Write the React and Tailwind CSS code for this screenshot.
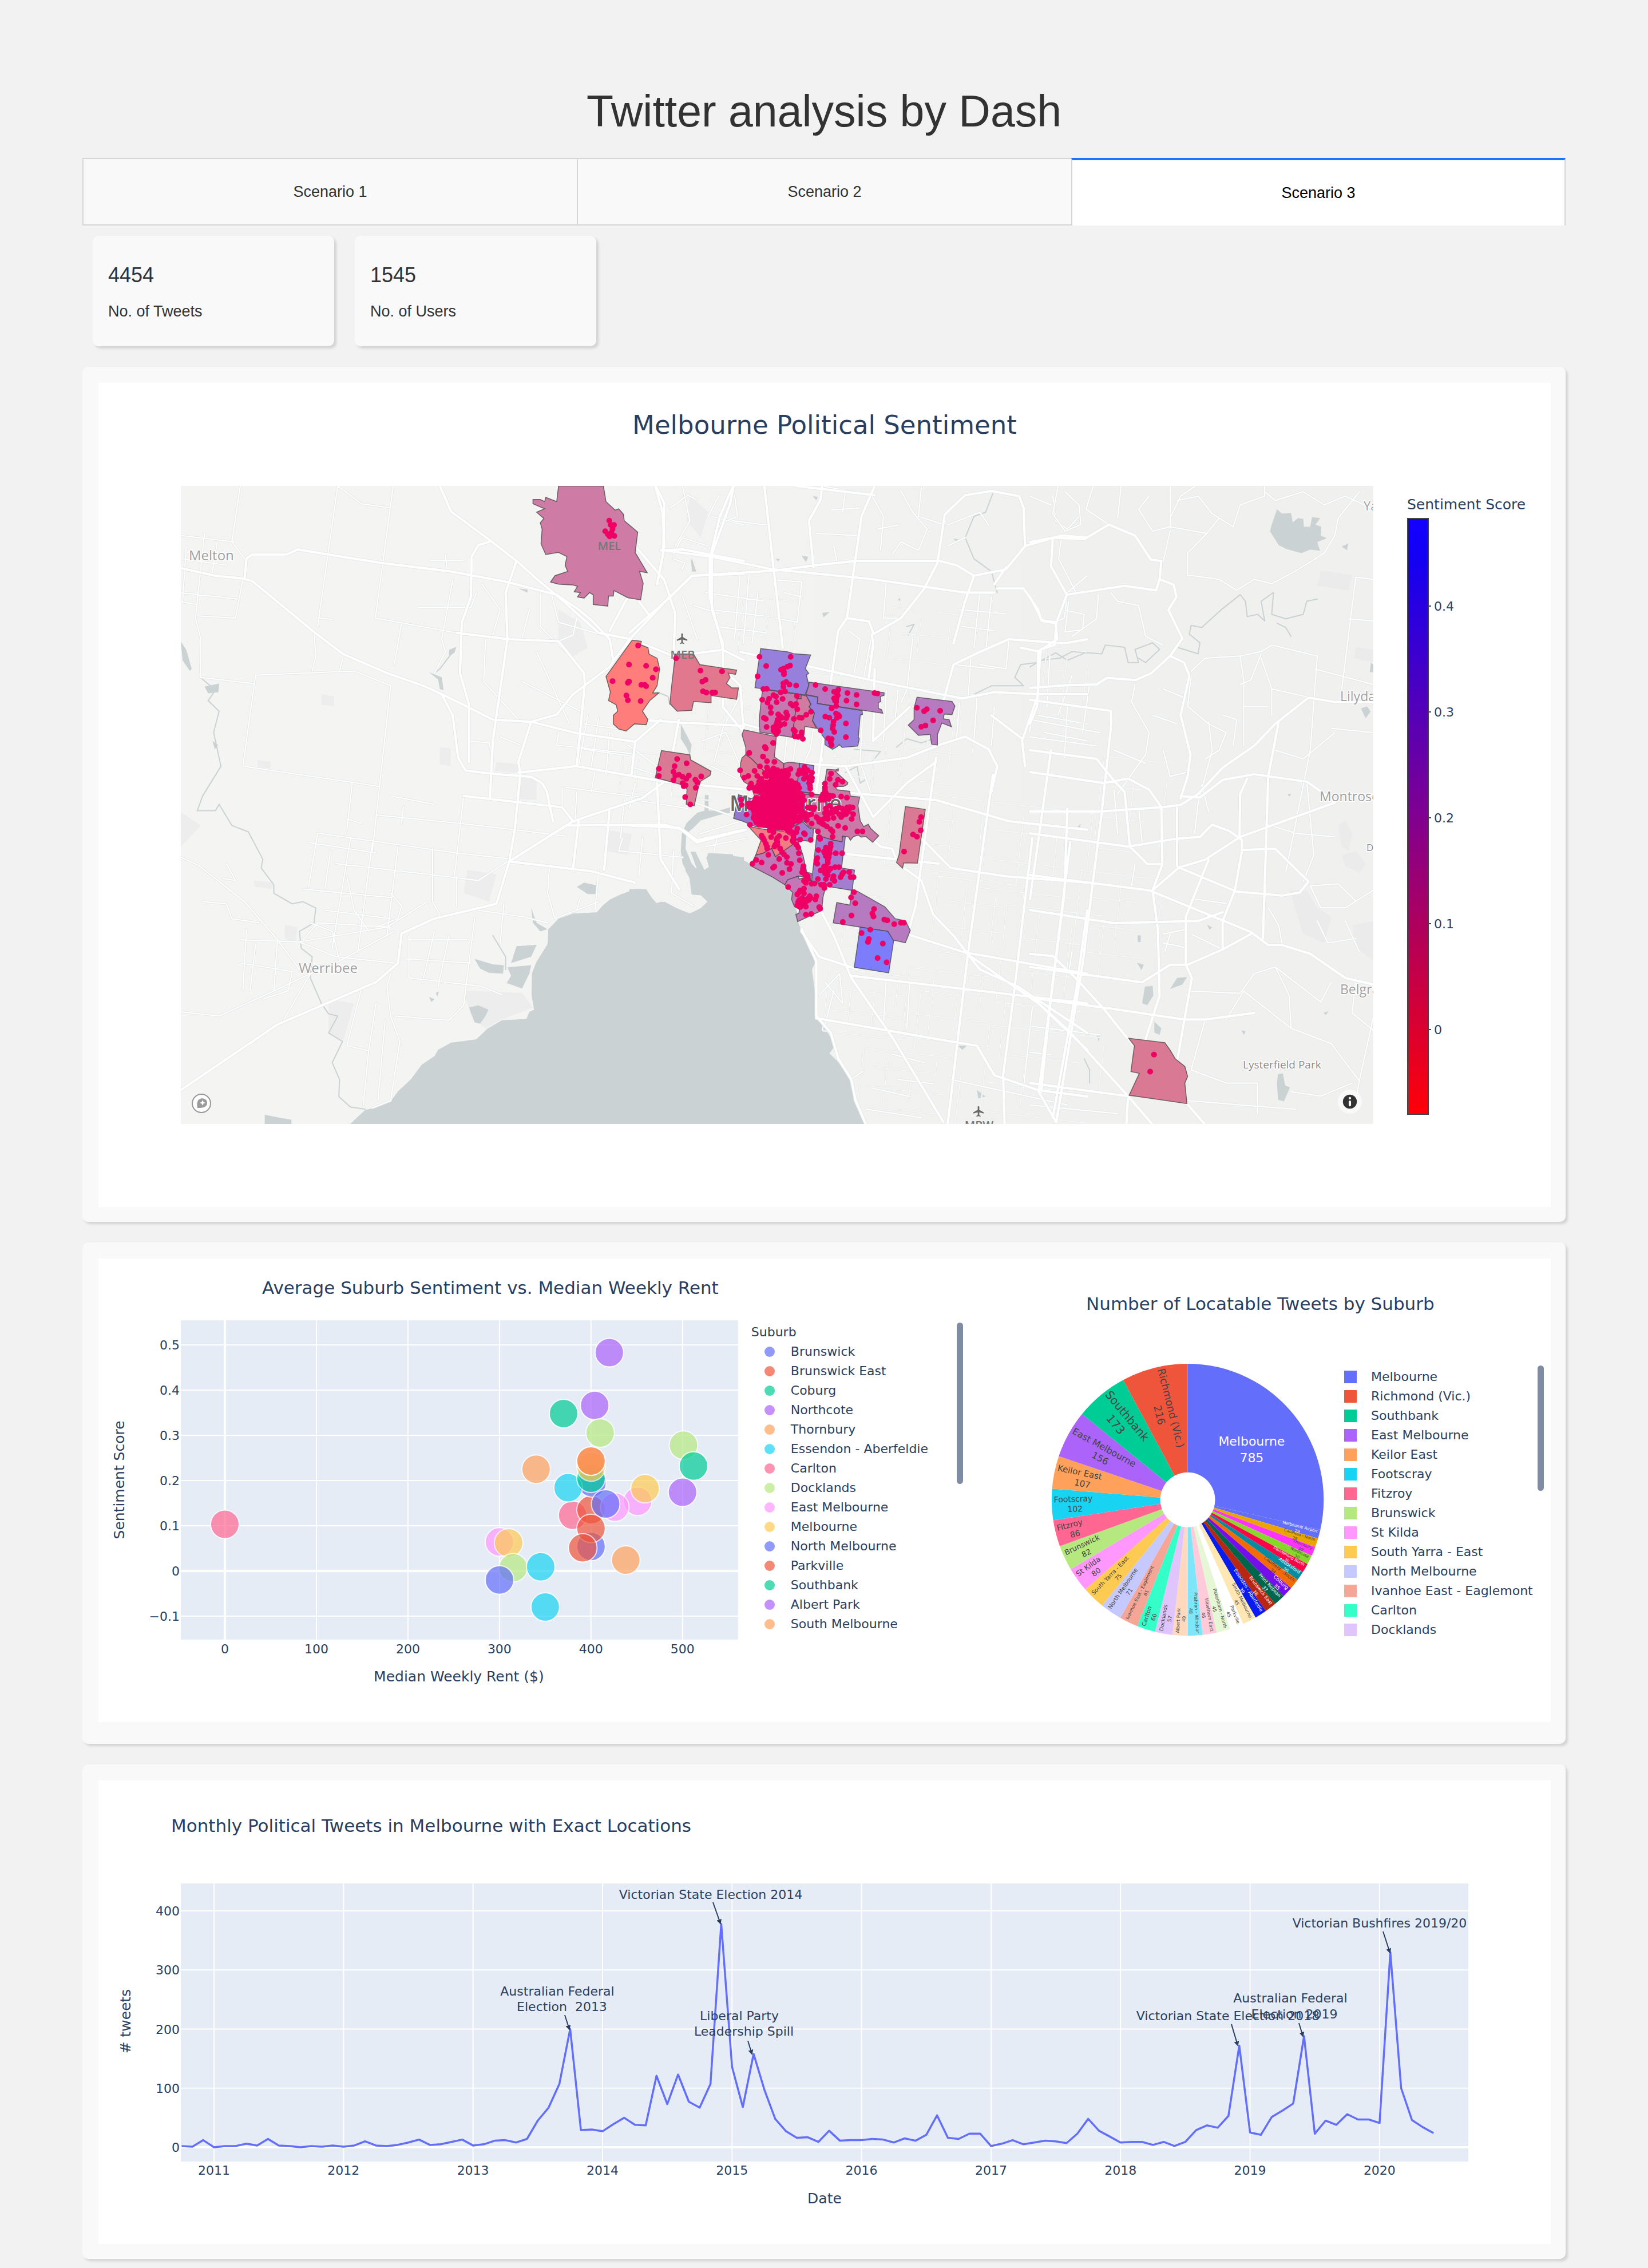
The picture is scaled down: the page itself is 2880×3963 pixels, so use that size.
import React from "react";
import { MdLocalAirport } from "react-icons/md";

/* ---------- Shared pieces ---------- */

function Panel({ children }) {
  return (
    <section className="mt-9 rounded-[10px] bg-[#f9f9f9] pt-7 pr-[26px] pb-[26px] pl-7 shadow-[4px_4px_4px_lightgrey]">
      {children}
    </section>
  );
}

function StatCard({ value, label }) {
  return (
    <div className="w-[422px] rounded-[10px] bg-[#f9f9f9] px-[27px] pt-[45px] pb-10 shadow-[4px_4px_4px_lightgrey]">
      <p className="text-[36px] leading-[48px]">{value}</p>
      <p className="mt-[18px] text-[27px] leading-[42px]">{label}</p>
    </div>
  );
}

function ScrollThumb({ height }) {
  return <div className="w-[11px] rounded-full bg-[#808BA4]" style={{ height }} />;
}

/* ---------- Map ---------- */

// Each sheet of the map has its own origin and scale.
const SHEETS = {
  west: [300, 820, 0.6378, 0.7398],
  centre: [1100, 820, 0.5102, 0.7398],
  east: [1800, 820, 0.6122, 0.7653],
  inner: [1270, 1230, 1 / 3, 1 / 3],
  north: [1300, 1110, 1 / 3, 1 / 3],
};

function Sheet({ name, children }) {
  const [x, y, sx, sy] = SHEETS[name];
  return <g transform={`translate(${x} ${y}) scale(${sx} ${sy})`}>{children}</g>;
}

function Lines({ d, width, color }) {
  return (
    <path d={d} fill="none" stroke={color} strokeWidth={width} strokeLinejoin="round" strokeLinecap="round" vectorEffect="non-scaling-stroke" />
  );
}

const MAJOR = {
  west: "M25 232L120 250 190 256 220 262 390 383 470 435 590 480 690 510 740 530 770 580 785 680 805 710 880 718 985 725 1015 740 1028 760 1045 830M200 255L205 210 220 200 315 200 345 188 430 200 575 220 765 240 920 265 1055 295 1115 330 1150 355 1200 400M735 38L765 98 870 165 945 215 1010 265 1060 300 1170 385 1260 400 1375 440 1510 425 1568 450M870 170L840 178 822 205 820 300 795 360 790 480 815 555 815 690M945 215L915 290 920 400 880 640 872 778M780 385L925 400 1060 405 1130 480 1132 505 1110 700M740 530L800 555 880 590 985 595 1055 578 1100 530 1200 465 1255 400 1365 300 1425 250 1568 245M985 595L950 690 955 715M985 595L1110 622 1270 642 1340 590M950 715L1110 700 1340 735 1568 755M800 770L1070 797 1100 830M25 1465L290 1310 560 1210 620 1165 630 1095 720 1060 890 1025 925 925 1080 840 1350 838 1400 850 1440 875 1568 850M925 925L1100 830 1290 775 1345 740M925 925L1150 948 1270 975M925 925L940 850 955 720M1260 400L1240 420 1210 450 1200 400M1325 38L1345 100 1350 180 1330 270M1200 130L1280 190 1350 260 1380 340 1375 440M1280 310L1310 345 1365 300M1540 38L1530 80 1480 200 1480 330 1510 410 1510 560 1568 620M1340 190L1400 188 1568 215M1270 590L1568 605M1330 740L1340 920 1390 990M1200 800L1185 945M1115 830L1100 940M1270 642L1260 720M1390 590L1370 680M1250 300L1200 380",
  centre: "M90 38L120 80 115 200 95 270M355 38L310 110 275 210 275 300 320 420 320 470 380 510 390 610M462 38L495 240 525 420M660 38L655 70 615 120 630 230M840 38L795 110 745 350 715 380 690 500 640 760M0 385L140 300 215 250 500 238 640 225 780 215 1060 215 1120 225 1180 250 1150 310 1110 410M115 190L280 205 490 235 830 258 1150 290 1250 290M570 38L840 60M1240 50L1150 60 1080 105 1055 220 1010 280 930 350 830 390 835 410 820 490M1240 50L1335 62 1350 90 1355 180 1290 235 1180 250M1355 180L1480 155 1568 160M1260 280L1350 280 1400 330 1410 355 1460 360 1465 400 1400 430 1400 530 1345 640 1355 700M1290 230L1250 270M745 350L820 358 835 385M1568 400L1490 410 1300 400 1200 430 1110 460 1070 560M380 430L620 465 850 500 1140 540M1140 540L1250 525 1400 530 1568 530M390 600L500 620M510 690L740 700 950 680 1060 650 1150 630 1230 660 1260 700 1240 760M500 690L640 720M840 470L835 640 960 560M1050 680L980 1030 960 1080M740 700L835 820 950 740 1050 690M700 760L1050 780 1300 830 1568 850M640 900L780 910 1060 930M780 840L860 890 900 895 920 930 1000 970 1040 1050 1110 1100 1200 1180 1330 1220M1000 870L1100 940 1290 960 1568 975M920 1090L1150 1140 1568 1190M590 1090L650 1150 740 1170 780 1180M640 1020L700 1100 760 1200 900 1340 1075 1540M640 1295L850 1320 1100 1350 1190 1360 1250 1430 1400 1465 1568 1480M760 1195L1568 1260M1245 720L1160 1140 1090 1546M1380 870L1320 1220 1280 1430 1285 1546M1500 800L1490 1000 1440 1270 1410 1470M1330 1220L1568 1330M1150 1140L1400 1260 1568 1370M0 840L170 845 230 880 400 850M590 1085L640 1160 640 1290 690 1330 715 1390 760 1440 775 1490 810 1546M1568 1040L1530 1230 1450 1530M1240 580L1345 635M1410 430L1340 420",
  east: "M0 165L65 155 155 158 225 125 300 150 345 205 375 208 370 250 410 262 418 290 395 320 435 385 400 425 440 440 455 470 430 560 458 650 450 700 430 750M65 155L60 220 105 285 75 350 70 400 30 410 20 540 0 580M105 285L270 265 360 275 370 250M0 290L35 345 70 350M0 498L100 492 190 490 220 475 300 480 345 465 400 425M0 525L230 550 232 580 205 780 150 1130 75 1490M0 640L190 660 240 710 270 735 285 860 335 900 378 900M0 690L210 715 280 705 340 730 375 770 378 900 350 960 365 1050 370 1200 330 1300M60 640L0 980M0 780L200 780 380 770 430 765 480 740 550 680 640 630 700 580 795 520 870 530 980 530M430 745L485 748 550 708 640 695 790 712 850 745 870 760 600 838 500 890 425 908 350 960M0 830L280 860 420 842 485 838 520 810 570 825 605 845 605 870 585 960 550 1030M605 868L700 865 795 940 770 965 720 972 590 963 425 908M0 925L340 960 630 1055 680 1085 720 1085 800 1105 900 1160 980 1175M710 575L680 700 665 1070M620 705L600 740 598 838M420 765L420 905M510 890L445 1020 445 1130 462 1160 420 1350M0 1005L240 1035 480 1030 550 1010M550 1030L550 1095 630 1060M0 1105L65 1110 130 1160 210 1230 330 1350 440 1440 500 1495M0 1135L320 1170 400 1130 450 1130 550 1095M0 1200L110 1280 280 1430 350 1495M0 1205L230 1230 440 1255 500 1255 640 1240M0 1400L280 1430 275 1495M115 850L60 1200 25 1420 75 1490",
};

const MINOR = {
  west: "M188 38L165 170 200 210M455 38L400 370M405 350L440 353M455 38L520 80 600 90M607 38L558 350 780 385M630 360L610 460M390 383L395 440 385 475M25 155L170 170M25 290L180 305M25 312L70 318M70 345L175 350 195 258M90 150L65 350 80 400 78 490M40 180L30 310M125 170L110 250M25 210L150 225M78 490L225 505M230 485L500 475 600 510 550 900M230 485L195 700 495 738 570 748M495 738L480 850M470 440L460 475M560 815L790 835 940 850 1080 865M800 770L775 960M400 858L375 985M400 858L620 885 780 905 920 918M375 880L560 905M490 870L440 1130M550 880L510 1140M620 890L590 1100M450 930L700 955 840 970 920 925M360 990L600 1010M435 900L420 990M25 915L75 935 200 1020 290 1110 350 1180M85 1020L150 1025 165 1060 240 1070M190 1110L350 1115 590 1080 700 1020M25 1280L130 1290 270 1235 380 1190 460 1160 610 1090M380 1190L300 1310M205 1085L195 1230M230 1120L215 1230M290 1110L280 1230M190 1165L330 1185 320 1230 250 1250M360 1110L400 1070 600 1080M350 1115L450 1150 610 1165M520 1225L480 1360 540 1372M560 1260L540 1370 525 1500M585 1300L565 1490M600 1190L590 1220 600 1290 625 1350 600 1490 550 1507M610 1290L760 1300 800 1265 830 1060M650 1110L810 1110M640 1155L820 1165M650 1200L850 1220 905 1240M650 1100L650 1200M720 1090L690 1200M760 1100L730 1220M715 895L715 1020 740 1060M780 960L780 1030M910 1025L900 1120M840 1040L960 1055 1030 1070M1035 940L1030 1000 1050 1060 1170 1020M1080 750L1300 775M1070 750L1070 797M1160 710L1150 760M1235 870L1225 900 1400 915M1290 870L1280 960M1060 620L1055 650 1260 670M1140 580L1115 700M1170 585L1150 700M1200 620L1190 720M1130 600L1250 615M1130 660L1250 675M900 630L955 650M815 640L870 645 880 690M675 325L820 325 835 290M750 200L755 240M710 215L800 215M770 260L740 400 750 430 720 480M1010 290L1010 370 1080 430M1040 290L1060 360 1200 395M1110 350L1100 390 1060 405M960 500L1120 570M1000 430L1090 600M860 400L855 500 950 590M850 270L900 330 880 390M980 330L960 400M150 930L175 970 140 965M380 1070L440 1090 460 1160M480 960L500 1040 540 1090M420 1040L600 1060M600 1000L630 1030 620 1060 560 1080M1120 1010L1110 1040M1170 945L1160 1040M1375 900L1370 1000 1430 1030M1110 760L1105 830M1250 650L1330 700M1240 780L1230 870M600 770L720 790M480 825L520 835M635 795L630 835M1400 40L1420 120 1380 180M1480 110L1568 130M1500 60L1470 110M1400 300L1440 400M1430 320L1500 340",
  centre: "M140 90L200 60 230 70M150 200L180 160 270 180M180 235L190 220 150 210M360 60L370 110 300 130M350 120L470 130M380 240L360 400M410 245L390 410M440 290L420 410M260 290L460 310M280 330L460 345M300 370L470 385M500 260L590 265 575 360 500 350M530 290L590 300M660 38L790 55M740 50L730 100M690 95L790 90M640 150L780 155M700 180L710 215M830 60L870 110 860 190M930 50L970 100 1020 140 990 190 930 170 900 200M850 140L920 130M1000 40L990 110 1080 130M1090 130L1200 100 1230 130M1090 180L1150 160M880 260L870 350 930 350M750 380L790 400 770 480M830 390L800 500M970 400L950 520 930 550M1130 330L1290 340M1140 370L1250 380M1200 290L1180 420M1240 300L1220 430M1300 400L1290 470 1200 460M1110 460L1250 470M1170 440L1160 540M1568 250L1500 290 1490 350 1460 360M1480 160L1470 210 1530 290M1450 60L1460 120 1500 140 1540 110M1400 580L1568 600M1390 540L1370 620M1440 440L1430 560M1500 560L1490 680M1420 620L1568 640M1250 560L1240 650M1190 540L1180 640M1130 550L1120 640M880 520L870 640M920 520L910 590M390 520L320 610 290 690M330 620L380 700M250 640L330 620M280 700L370 730M200 780L360 820M240 860L380 830M260 890L400 870M300 870L290 900M0 700L90 720M20 740L0 800M20 780L200 800M640 560L620 660 600 690M540 630L530 690M570 640L560 690M670 560L660 690M800 560L790 690 830 770M1100 1440L1500 1500M880 1200L870 1310M960 1210L950 1320M1380 1270L1350 1460M700 1230L670 1310M650 1240L720 1190 730 1260 670 1210M900 1380L1010 1400M920 1440L1040 1450M800 1420L760 1440M830 1460L960 1480M810 1510L1000 1530",
  east: "M80 38L65 100 100 140 145 125 140 80 100 50M180 38L160 90 225 125M260 38L250 110M400 38L400 130 350 140 310 90 340 60M420 70L480 60 520 100 580 130 600 80 670 60 670 38M400 110L430 60 470 38M670 50L700 70 780 50 840 80 900 60 980 90M400 130L505 145 450 190 450 240 540 250 590 275 640 250 690 260 760 230 840 190 870 150 880 110 940 50M380 210L400 140M505 145L540 110M110 300L100 370 150 365 155 330 100 320M195 285L190 340 120 380M230 280L250 300 310 310 330 380 380 400M460 460L500 430 600 425 660 415 690 400 820 425 800 640 730 920M930 245L890 500M930 245L980 250M910 340L980 345M600 425L610 480 610 630M660 420L630 480 600 490M660 430L690 500 690 560M690 500L800 520M510 575L520 640 480 760M460 470L450 540 510 580 560 600 540 640 500 660M815 455L980 490M870 600L780 660 700 640M860 590L980 600M610 540L680 540M790 710L810 880 780 940M680 810L760 830 870 838M800 950L880 945 930 985M470 980L560 990M460 1060L550 1095M450 1190L600 1195 640 1150 700 1135 740 1200 745 1275 610 1190M610 1190L560 1255M500 1255L460 1370 560 1400 650 1400 650 1470M745 1275L860 1310 940 1395 930 1440M940 1395L980 1250M0 1270L200 1290M0 1330L60 1335M720 1085L710 1040 680 1000M700 1135L830 1215 860 1170M930 1160L920 1240 980 1280M820 1030L850 1080 930 1070M900 1030L940 1100M800 950L830 1000 900 1000 980 960M745 1420L830 1430 920 1400M450 1440L600 1450 760 1460M300 490L290 530 340 600 330 650 250 740M380 500L440 520M350 560L420 580M240 640L330 670M240 730L250 830M310 770L320 850M120 470L80 560M170 490L150 600M0 570L200 600M0 610L190 630M120 1100L110 1150M300 900L290 950M380 1080L440 1090M380 1060L440 1050M385 1100L400 1060M480 760L470 830M490 720L510 780M380 640L400 700 450 690M550 560L590 570 580 630M0 60L60 80M0 1450L250 1470",
};

// Local streets: tilted blocks given as [x, y, width, height, columns, rows].
const BLOCKS = [
  [1590, 1200, 120, 160, 3, 3], [1560, 1380, 160, 130, 3, 3], [1640, 1530, 150, 130, 3, 3],
  [1730, 1400, 180, 150, 3, 3], [1450, 1690, 160, 110, 4, 3], [1590, 1690, 170, 120, 4, 3],
  [1510, 1830, 170, 100, 4, 3], [1760, 1580, 170, 170, 3, 3], [1730, 1790, 200, 150, 3, 3],
  [1480, 1560, 70, 90, 3, 3], [1930, 1320, 110, 160, 2, 3], [1890, 1520, 140, 140, 2, 3],
  [1390, 1170, 110, 90, 4, 3], [1300, 1040, 90, 100, 2, 3], [1240, 1230, 80, 80, 3, 3],
  [1440, 1290, 110, 60, 5, 2], [1560, 1060, 150, 90, 3, 2], [1180, 1330, 90, 60, 3, 3],
  [1090, 1310, 80, 70, 3, 2], [1830, 1130, 70, 120, 2, 3],
];

function blockPath() {
  const tilt = 0.115;
  let d = "";
  for (const [x, y, w, h, nx, ny] of BLOCKS) {
    for (let i = 0; i <= nx; i++) {
      const px = x + (w * i) / nx;
      const py = y + tilt * (px - x) + ((i * 37) % 5) * 6;
      const len = h - ((i * 53) % 4) * 20;
      d += `M${px} ${py}L${px - tilt * len} ${py + len}`;
    }
    for (let j = 0; j <= ny; j++) {
      const py = y + (h * j) / ny;
      const px = x - tilt * (py - y) + ((j * 29) % 3) * 10;
      const len = w - ((j * 31) % 4) * 18;
      d += `M${px} ${py}L${px + len} ${py + tilt * len}`;
    }
  }
  return d;
}

const BLOCK_D = blockPath();

const WATER = {
  west: "M488 1546L530 1512 555 1507 600 1492 620 1468 655 1440 685 1405 720 1385 730 1370 765 1353 835 1345 865 1320 905 1300 972 1297 980 1280 993 1275 986 1240 987 1190 998 1165 1030 1120 1032 1085 1060 1060 1100 1048 1165 1045 1180 1030 1200 1015 1230 1003 1270 990 1300 990 1315 1010 1330 1025 1350 1020 1390 1038 1420 1048 1450 1035 1468 1020 1450 1005 1425 1003 1418 960 1400 930 1395 900 1398 860 1410 835 1440 810 1460 805 1461 768 1471 768 1471 805 1500 805 1530 797 1530 810 1500 815 1450 828 1430 845 1410 860 1408 895 1425 930 1440 945 1422 902 1435 902 1460 945 1472 938 1465 915 1480 905 1568 915 1568 1546ZM255 1523L295 1530 328 1535 328 1546 255 1546ZM815 1270L840 1265 868 1275 860 1290 845 1308 830 1305ZM1110 985L1130 975 1168 982 1165 1002 1140 1002ZM945 1125L1000 1122 985 1150 930 1165ZM920 1175L985 1170 980 1190 960 1225 918 1212 930 1195ZM830 1155L880 1168 910 1170 908 1190 870 1188 845 1178ZM25 405L40 425 55 470 50 475 30 450ZM760 425L780 418 775 432 760 440ZM705 478L740 490 745 520 735 518 730 495ZM1425 208L1437 240 1425 240ZM1395 600L1425 650 1420 675 1410 655 1395 635ZM90 512L130 505 128 525 100 528ZM112 640L127 650 118 660ZM950 280L975 283 975 290ZM705 1245L720 1250 712 1257ZM724 1235L732 1232 728 1245ZM985 1035L1000 1070 1030 1085 1010 1090 990 1070Z",
  centre: "M0 990L40 990 60 1010 85 1025 110 1020 205 1048 240 1040 268 1020 250 1005 215 1003 215 975 190 945 240 940 258 945 278 935 265 915 270 905 355 908 350 928 362 928 365 915 400 925 420 935 470 950 535 982 558 1000 560 1020 575 1045 578 1068 590 1090 635 1135 636 1165 625 1180 635 1230 638 1290 680 1330 705 1360 685 1378 710 1395 760 1440 768 1490 805 1546 0 1546ZM210 208L228 240 215 240ZM590 203L612 205 605 218ZM628 62L645 64 640 72ZM660 338L685 336 665 348ZM1110 162L1130 165 1122 172ZM1125 1360L1155 1360 1140 1370ZM1190 1465L1220 1480 1195 1485ZM500 210L515 211 510 216ZM920 305L928 303 927 311Z",
  east: "M690 125L705 90 720 100 745 98 750 120 765 110 780 112 782 130 800 130 805 108 828 110 815 125 832 130 830 150 847 156 820 165 828 185 800 182 775 190 750 185 730 180 710 172 685 140ZM328 1180L350 1178 352 1200 335 1222 320 1218ZM355 1260L375 1275 370 1290 355 1285ZM400 1185L420 1160 448 1158 435 1175ZM708 1380L722 1378 728 1405 742 1410 725 1442 708 1438 705 1400ZM305 1125L325 1130 318 1142ZM307 1063L316 1063 316 1078 308 1078ZM945 545L962 540 972 552 958 567ZM973 440L980 445 980 462 970 462ZM130 820L145 808 142 820ZM190 1292L200 1292 196 1305ZM505 1038L520 1045 512 1050ZM604 1280L616 1282 610 1290ZM838 1240L852 1235 845 1245ZM890 175L908 168 905 184ZM735 740L746 740 740 746Z",
};

const STREAMS = {
  west: "M78 490L120 520 100 545 130 570 115 620 135 700 85 770 70 805 120 805 130 790 165 840 210 855 250 920 245 940 280 980 280 1000 330 1025 360 1020 395 1035 390 1070 350 1090 355 1130 385 1150 380 1200 410 1260 430 1285 455 1290 430 1330 468 1350 440 1400 460 1440 458 1480 490 1505 530 1510M880 1100L915 1150 915 1180M1330 525L1360 535 1365 555M720 480L735 470 770 430",
  centre: "M1568 430L1500 450 1460 432 1400 455 1340 460 1320 490 1350 510 1240 510 1180 530 1140 540M1245 55L1220 100 1180 110 1150 160 1180 210 1240 240 1260 290M770 660L860 665 830 690M740 715L780 700 790 740 812 730M915 655L950 635 1000 645 1040 635M950 370L975 365 955 390",
  east: "M0 450L30 435 85 430 120 415 205 420 215 400 270 405 280 440 310 440 300 410 350 395 370 410 330 440 310 430M420 405L480 420 485 395 455 375 460 355 490 360 545 320 600 285 615 300 620 335 650 330 670 345 660 300 695 280 690 330 730 340 780 330 790 300 820 295M705 350L730 360 745 380M155 1345L170 1370 170 1400",
};

const HILLS = "M880 810L900 800 920 830 910 870 890 860ZM890 880L930 870 960 900 940 920 900 905ZM740 960L790 960 820 1000 860 1020 840 1080 780 1060ZM920 1040L980 1030 980 1120 930 1090ZM830 230L920 240 910 275 820 265ZM930 405L980 410 980 440 925 430Z";
const PARKS = "M25 808L80 840 25 890ZM810 945L890 955 870 1020 800 1000ZM1060 330L1120 360 1140 420 1100 440 1060 400ZM235 685L272 690 270 705 235 703ZM410 530L445 535 445 558 410 555ZM735 655L765 658 765 700 735 695ZM890 690L950 695 950 715 885 712ZM950 725L1000 730 1000 780 950 778ZM225 970L280 975 275 990 228 985ZM800 1230L960 1235 990 1270 900 1300 860 1320 820 1290ZM430 1250L500 1260 470 1350 430 1330ZM310 1075L345 1080 340 1115 310 1108ZM1420 60L1470 100 1450 160 1410 120ZM1190 850L1260 860 1250 910 1190 900Z";

const SUBURBS = {
  west: [
    ["#CC76A1", "1060,38 1183,38 1190,75 1215,95 1225,92 1238,105 1240,120 1277,147 1270,195 1303,243 1282,240 1292,268 1285,307 1250,302 1212,285 1210,298 1197,298 1195,322 1155,318 1155,295 1145,290 1130,303 1112,300 1120,290 1103,288 1112,275 1100,272 1060,270 1038,265 1050,250 1085,240 1078,225 1083,205 1060,195 1025,200 1012,175 1015,140 1010,125 1020,115 1000,100 1022,92 990,80 990,70 1010,70 1022,75 1025,65 1055,75"],
    ["#FF7876", "1262,402 1287,405 1285,413 1305,420 1308,435 1330,445 1337,470 1330,510 1318,527 1335,527 1310,545 1290,570 1305,590 1300,602 1268,600 1245,617 1225,612 1210,600 1210,580 1222,570 1218,555 1197,545 1202,525 1190,488"],
    ["#E17389", "1380,435 1430,435 1447,460 1548,473 1545,483 1525,480 1530,490 1520,505 1535,515 1553,515 1548,542 1478,533 1478,550 1430,547 1425,568 1385,570 1365,552 1370,510"],
    ["#D9748F", "1342,663 1420,673 1422,685 1478,712 1475,722 1450,735 1443,750 1432,793 1410,790 1412,755 1405,745 1325,727"],
  ],
  north: [
    ["#937ADB", "88,67 230,84 260,94 350,100 322,172 340,197 328,205 336,240 340,260 320,310 58,272 78,135"],
    ["#C274AD", "98,280 300,310 300,330 280,328 253,532 84,505 80,440 90,345"],
    ["#D0759B", "300,310 330,315 350,360 342,372 370,405 360,445 380,485 320,475 315,520 253,530 280,330 300,330"],
    ["#B375BD", "342,243 735,298 735,312 715,318 718,345 705,350 705,380 722,387 728,406 385,355 387,320 325,308 340,260"],
    ["#937ADB", "325,310 387,322 385,355 620,392 622,412 610,415 600,530 605,540 597,578 515,585 500,570 490,580 465,595 440,580 425,570 425,540 410,520 405,500 385,485 360,445 370,405 342,372 352,358"],
  ],
  inner: [
    ["#D0759B", "90,133 260,168 250,275 300,310 298,345 250,370 190,345 130,285 100,262 100,225 80,158"],
    ["#D9748F", "100,262 130,285 190,345 222,400 222,470 145,480 130,430 90,405 72,375 72,310 80,280"],
    ["#C975A3", "300,308 325,302 382,308 370,430 300,450 222,430 222,400 260,360 298,345"],
    ["#9B78CE", "383,308 457,320 440,462 368,458 372,400"],
    ["#8F74CC", "62,473 150,500 200,600 250,650 150,640 85,612 36,597"],
    ["#B372C0", "145,480 222,460 400,460 500,475 485,660 400,610 330,650 200,640"],
    ["#9F78CC", "330,650 400,615 430,645 455,655 450,718 365,710"],
    ["#F2767F", "115,640 200,655 300,665 365,705 340,740 255,798 235,755 190,780 152,790 180,712"],
    ["#C073B3", "152,790 190,780 235,755 255,798 345,735 370,705 400,790 420,880 445,885 440,925 415,905 375,900 320,920 305,945 240,905 125,845"],
    ["#C975A3", "525,340 570,343 585,337 585,348 568,350 635,410 632,420 612,430 565,430 580,447 645,455 648,480 697,485 688,530 700,610 718,640 742,628 755,650 797,688 765,722 730,692 705,695 690,685 665,692 648,712 640,695 607,690 605,720 560,712 480,690 485,660 430,640 400,600 410,470 500,475 512,420"],
    ["#9F78CE", "472,685 560,712 605,720 607,690 622,692 602,857 670,868 658,975 535,955 445,925 455,840"],
    ["#C073B3", "305,945 320,918 375,900 380,915 415,905 445,925 520,950 505,1010 498,1080 372,1138 362,1100 378,1095 382,1075 355,1060 340,1022 345,985"],
    ["#D9748F", "937,535 1041,550 1000,832 928,830 922,858 890,828 903,790"],
  ],
  centre: [
    ["#B375BD", "710,1022 755,1028 760,992 780,995 875,1032 910,1060 945,1065 962,1088 945,1117 900,1110 885,1090 790,1080 698,1070"],
    ["#7878FC", "790,1080 885,1090 905,1112 888,1188 770,1175"],
    ["#B375BD", "985,537 1105,547 1115,558 1105,578 1078,577 1075,588 1095,590 1103,607 1070,598 1055,625 1055,650 1035,648 1030,625 990,627 955,603 975,590 975,562"],
  ],
  east: [["#D9748F", "282,1298 385,1308 400,1325 415,1345 442,1362 450,1385 442,1400 448,1447 283,1428 312,1378 288,1374 298,1315"]],
};

const TWEETS = {
  west: "1199,120 1212,130 1203,130 1208,140 1188,145 1195,152 1200,157 1213,156 1205,148 1278,415 1253,460 1300,463 1327,471 1318,491 1208,499 1253,500 1250,503 1287,508 1300,511 1296,508 1246,533 1250,544 1285,546 1382,445 1449,474 1508,476 1454,500 1463,496 1456,523 1465,526 1481,526 1489,526 1385,683 1411,693 1335,706 1378,700 1335,723 1375,713 1375,733 1380,722 1390,720 1400,725 1417,722 1410,730 1400,740 1408,745 1403,747 1451,724 1435,732 1440,738 1436,751 1407,773 1421,790",
  north: "82,110 245,110 117,158 72,212 195,178 208,172 228,162 242,156 210,190 210,202 222,242 207,250 239,256 207,268 274,260 102,279 120,278 216,292 193,296 96,335 155,311 168,318 132,330 124,350 172,348 203,331 140,375 278,316 245,356 273,358 257,366 280,385 142,404 105,430 115,436 180,412 190,422 222,402 228,418 222,432 177,440 184,455 170,465 213,462 119,478 155,480 178,490 155,497 170,515 262,436 291,428 303,430 327,414 352,398 260,492 267,500 303,506 268,527 285,530 300,522 309,540 376,258 426,279 495,282 473,293 485,300 492,312 473,328 485,330 484,346 484,368 460,380 543,300 538,340 591,310 591,359 685,300 700,302 483,407 500,422 488,430 427,424 448,429 470,450 468,468 465,485 474,504 535,460 403,496 535,531 442,538 460,541 455,558 460,574 153,562 110,583 115,590 28,614 101,633 175,450 190,470 180,500 165,505 200,430 490,292 478,340 495,415",
  inner: "244,202 202,226 118,254 190,273 211,297 250,301 174,325 146,348 70,345 92,384 113,375 128,415 118,438 211,330 245,335 160,375 180,390 200,360 230,370 215,350 260,355 290,350 320,345 334,338 320,370 300,375 270,370 255,385 235,395 275,390 382,345 375,365 408,328 400,345 425,345 447,357 412,372 405,390 440,378 445,400 432,412 438,440 445,472 75,497 78,526 104,577 122,630 152,492 120,520 125,540 183,688 195,710 211,745 233,695 225,660 245,670 275,690 262,710 265,735 218,788 250,745 280,755 290,775 300,785 315,800 275,810 250,850 243,856 291,883 316,830 337,836 329,863 135,835 155,815 183,829 320,660 370,650 345,670 350,690 310,700 345,715 375,750 365,735 378,780 383,817 402,848 400,872 410,890 422,910 410,680 405,675 440,710 385,708 478,665 490,705 485,695 480,763 475,805 470,830 380,605 390,580 415,590 443,575 440,540 425,540 460,540 445,625 420,605 470,590 485,615 500,625 510,630 525,640 545,655 555,665 555,693 510,600 520,590 515,570 530,580 525,560 520,545 540,530 555,550 575,545 560,565 590,540 605,545 600,590 590,575 625,575 632,540 645,538 660,540 663,575 655,600 560,595 584,636 621,647 685,665 712,665 495,490 510,500 520,480 520,465 515,450 515,435 515,415 540,390 547,362 583,395 571,421 607,404 540,478 558,480 600,482 630,488 545,730 545,745 520,750 510,770 530,770 520,795 535,800 525,785 572,780 605,780 530,830 520,850 545,860 568,853 588,853 492,870 515,885 510,870 530,895 560,900 555,915 565,925 597,905 612,880 605,890 642,878 650,905 665,905 478,915 520,915 445,940 460,938 495,945 512,962 510,945 540,945 322,957 405,965 385,975 380,985 370,995 405,990 435,1005 470,1005 465,1022 420,1030 380,1025 400,1045 385,1040 370,1052 385,1062 415,1060 400,1030 485,1062 490,1070 415,1102 443,1098 667,984 652,1012 674,1042 654,1106 1019,590 1010,615 1017,660 977,682 997,693 930,771 997,17 1049,25 1035,35 1082,83 1020,117 1042,110 1119,33 420,1020 405,925 425,900 170,405 180,430 160,440 205,375 395,560 370,610 437,425 447,385 420,380 415,355 435,395 390,360 495,500 530,480 505,470 535,495 545,570 575,560 615,560 640,560 610,580 500,605 530,600 480,600 430,580 410,570 455,550 525,760 540,760 515,780 540,780 530,815 510,850 535,870 520,860 470,815 475,835 395,1055 375,1035 410,1040 395,1015 395,975 440,1015 430,1025 350,705 265,720 265,700 255,735 205,730 212,755 190,700 245,655 330,670 365,670 350,720 400,860 395,880 425,915 415,935",
  centre: "731,1068 838,1037 832,1048 836,1055 873,1062 883,1064 907,1073 930,1070 940,1070 825,1086 795,1094 820,1108 817,1115 868,1119 850,1153 881,1163",
  east: "354,1335 343,1374",
};

// Tightly packed tweets in the city centre: [y, first x, last x].
const CITY_ROWS = [
  [340, 240, 275], [352, 215, 330], [364, 205, 330], [376, 215, 325], [388, 240, 290],
  [400, 235, 350], [412, 180, 370], [424, 165, 375], [436, 120, 380], [450, 150, 380], [464, 180, 400], [478, 190, 400],
  [492, 150, 405], [506, 145, 405], [520, 115, 400], [534, 118, 400], [548, 140, 390], [562, 145, 370], [576, 145, 365],
  [590, 140, 400], [604, 150, 385], [618, 155, 355], [632, 170, 350], [646, 225, 330],
];

function tweetPoints() {
  const out = [];
  for (const [name, list] of Object.entries(TWEETS)) {
    const [ox, oy, sx, sy] = SHEETS[name];
    for (const pair of list.split(" ")) {
      const [x, y] = pair.split(",").map(Number);
      out.push([ox + x * sx, oy + y * sy]);
    }
  }
  for (const [y, from, to] of CITY_ROWS) {
    for (let x = from; x <= to; x += 13) {
      out.push([1270 + x / 3, 1230 + (y + ((x * 7) % 9) - 4) / 3]);
    }
  }
  return out;
}

const TWEET_POINTS = tweetPoints();

const PLACES = [
  ["Melton", 330, 978, 24, "#a0a0a0"],
  ["Werribee", 522, 1699, 24, "#a0a0a0"],
  ["Yarra Glen", 2383, 891, 22, "#a0a0a0"],
  ["Lilydale", 2342, 1224, 23, "#a0a0a0"],
  ["Montrose", 2306, 1399, 23, "#a0a0a0"],
  ["Dandenong", 2388, 1486, 17, "#8a8a8a"],
  ["Belgrave", 2342, 1736, 23, "#a0a0a0"],
  ["Lysterfield Park", 2172, 1866, 19, "#8a8a8a"],
];

const CODES = [
  ["MEL", 1065, 960],
  ["MEB", 1193, 1150],
  ["MBW", 1711, 1972],
];

function MelbourneMap() {
  const names = ["west", "centre", "east"];
  return (
    <svg viewBox="316 848 2084 1115" className="block w-full" role="img" aria-label="Map of Melbourne">
      <defs>
        <linearGradient id="land" x1="0" x2="1" y1="0" y2="0">
          <stop offset="0.35" stopColor="#f4f4f3" />
          <stop offset="0.75" stopColor="#f0f0ef" />
        </linearGradient>
      </defs>
      <rect x="316" y="848" width="2084" height="1115" fill="url(#land)" />
      <Sheet name="west"><path d={PARKS} fill="#ededed" /></Sheet>
      <Sheet name="east"><path d={HILLS} fill="#ebebeb" /></Sheet>
      {names.map((n) => (
        <Sheet key={n} name={n}>
          <path d={WATER[n]} fill="#cad2d3" />
          <Lines d={STREAMS[n]} width={2} color="#cad2d3" />
        </Sheet>
      ))}
      <path d={BLOCK_D} fill="none" stroke="#eaecec" strokeWidth="3" />
      <path d={BLOCK_D} fill="none" stroke="#fbfbfb" strokeWidth="1" />
      {names.map((n) => (
        <Sheet key={n} name={n}>
          <Lines d={MINOR[n]} width={4} color="#e6e9e9" />
          <Lines d={MINOR[n]} width={2} color="#fff" />
        </Sheet>
      ))}
      {names.map((n) => (
        <Sheet key={n} name={n}>
          <Lines d={MAJOR[n]} width={6} color="#e6e9e9" />
        </Sheet>
      ))}
      {names.map((n) => (
        <Sheet key={n} name={n}>
          <Lines d={MAJOR[n]} width={4} color="#fff" />
        </Sheet>
      ))}
      {Object.entries(SUBURBS).map(([n, list]) => (
        <Sheet key={n} name={n}>
          {list.map(([fill, points]) => (
            <polygon key={points} points={points} fill={fill} fillOpacity="0.96" stroke="#444" strokeOpacity="0.75" strokeWidth="1.5" vectorEffect="non-scaling-stroke" />
          ))}
        </Sheet>
      ))}
      <g fontFamily="'Open Sans', sans-serif" stroke="#fff" strokeWidth="3" strokeLinejoin="round" paintOrder="stroke">
        {PLACES.map(([name, x, y, size, fill]) => (
          <text key={name} x={x} y={y} fontSize={size} fill={fill}>{name}</text>
        ))}
        <text x="1275" y="1416" fontSize="37" fontWeight="600" fill="#666">Melbourne</text>
      </g>
      <g fontFamily="'Open Sans', sans-serif" fontSize="20" fontWeight="600" fill="#777" textAnchor="middle">
        {CODES.map(([code, x, y]) => (
          <text key={code} x={x} y={y}>{code}</text>
        ))}
      </g>
      <MdLocalAirport x="1181" y="1104" size="22" color="#666" />
      <MdLocalAirport x="1699" y="1930" size="22" color="#666" />
      <g fill="#EF0064">
        {TWEET_POINTS.map(([x, y], i) => (
          <circle key={i} cx={x} cy={y} r="5" />
        ))}
      </g>
      <g transform="translate(352 1927)">
        <circle r="16" fill="#fff" fillOpacity="0.9" stroke="#9a9a9a" strokeWidth="2" />
        <path d="M-7 8C-8 2-8-4-4-7C0-10 6-9 9-5C11-1 10 4 6 6C2 8-3 8-7 8Z" fill="#9a9a9a" />
        <path d="M2-6L3.500-2.500 7-1 3.500 0.500 2 4 0.500 0.500-3-1 0.500-2.500Z" fill="#fff" />
      </g>
    </svg>
  );
}

function ColorBar() {
  const ticks = [["0.4", 210], ["0.3", 395], ["0.2", 580], ["0.1", 765], ["0", 950]];
  return (
    <svg viewBox="0 0 251 1115" className="block w-[251px] shrink-0" fontFamily="'DejaVu Sans', sans-serif" fill="#2a3f5f">
      <defs>
        <linearGradient id="score" x1="0" x2="0" y1="0" y2="1">
          <stop offset="0" stopColor="#1400ff" />
          <stop offset="0.06" stopColor="#1200f5" />
          <stop offset="0.5" stopColor="#800090" />
          <stop offset="1" stopColor="#ff0008" />
        </linearGradient>
      </defs>
      <text x="0" y="41" fontSize="25">Sentiment Score</text>
      <rect x="1" y="57" width="36" height="1041" fill="url(#score)" stroke="#444" strokeWidth="2" />
      {ticks.map(([label, y]) => (
        <g key={label}>
          <path d={`M38 ${y}H42`} stroke="#444" strokeWidth="2" />
          <text x="47" y={y + 8} fontSize="22">{label}</text>
        </g>
      ))}
    </svg>
  );
}

/* ---------- Scatter ---------- */

const C = {
  blue: "#636efa", red: "#EF553B", green: "#00cc96", purple: "#ab63fa", orange: "#FFA15A",
  cyan: "#19d3f3", rose: "#FF6692", lime: "#B6E880", pink: "#FF97FF", yellow: "#FECB52",
};

const BUBBLES = [
  [501, 0.278, C.lime], [512, 0.232, C.green], [451, 0.154, C.pink], [459, 0.182, C.yellow],
  [380, 0.123, C.rose], [400, 0.135, C.red], [426, 0.141, C.pink], [401, 0.195, C.blue],
  [416, 0.148, C.blue], [400, 0.054, C.blue], [400, 0.094, C.red], [391, 0.051, C.red],
  [375, 0.184, C.cyan], [400, 0.205, C.green], [400, 0.23, C.yellow], [400, 0.243, C.red],
  [400, 0.243, C.orange], [420, 0.483, C.purple], [404, 0.366, C.purple], [370, 0.348, C.green],
  [410, 0.305, C.lime], [340, 0.225, C.orange], [0, 0.103, C.rose], [300, 0.064, C.pink],
  [310, 0.062, C.yellow], [315, 0.007, C.lime], [345, 0.009, C.cyan], [300, -0.02, C.blue],
  [350, -0.08, C.cyan], [438, 0.024, C.orange], [500, 0.174, C.purple],
];

const SUBURB_LEGEND = [
  ["Brunswick", C.blue], ["Brunswick East", C.red], ["Coburg", C.green], ["Northcote", C.purple],
  ["Thornbury", C.orange], ["Essendon - Aberfeldie", C.cyan], ["Carlton", C.rose], ["Docklands", C.lime],
  ["East Melbourne", C.pink], ["Melbourne", C.yellow], ["North Melbourne", C.blue], ["Parkville", C.red],
  ["Southbank", C.green], ["Albert Park", C.purple], ["South Melbourne", C.orange],
];

function ScatterPlot() {
  const X = (v) => 221 + 1.6 * v;
  const Y = (v) => 474 - 790 * v;
  const xs = [0, 100, 200, 300, 400, 500];
  const ys = [0.5, 0.4, 0.3, 0.2, 0.1, 0, -0.1];
  return (
    <svg viewBox="0 0 1141 738" className="block min-w-0 flex-1" fontFamily="'DejaVu Sans', sans-serif" fill="#2a3f5f">
      <rect x="144" y="36" width="974" height="558" fill="#E5ECF6" />
      <g stroke="#fff" strokeWidth="2">
        {xs.map((v) => <path key={v} d={`M${X(v)} 36V594`} strokeWidth={v === 0 ? 4 : 2} />)}
        {ys.map((v) => <path key={v} d={`M144 ${Y(v)}H1118`} strokeWidth={v === 0 ? 4 : 2} />)}
      </g>
      {BUBBLES.map(([x, y, c], i) => (
        <circle key={i} cx={X(x)} cy={Y(y)} r="25" fill={c} stroke="#fff" strokeWidth="2" opacity="0.7" />
      ))}
      <g fontSize="22" textAnchor="middle">
        {xs.map((v) => <text key={v} x={X(v)} y="618">{v}</text>)}
      </g>
      <g fontSize="22" textAnchor="end">
        {ys.map((v) => <text key={v} x="142" y={Y(v) + 8}>{String(v).replace("-", "−")}</text>)}
      </g>
      <text x="630" y="667" fontSize="25" textAnchor="middle">Median Weekly Rent ($)</text>
      <text transform="translate(45 315) rotate(-90)" fontSize="25" textAnchor="middle">Sentiment Score</text>
    </svg>
  );
}

/* ---------- Pie ---------- */

const DARK = "#444";
const WHITE = "#fff";
// [name, tweets, slice colour, text colour, text size], clockwise from the top.
const SLICES = [
  ["Melbourne", 785, "#636efa", WHITE, 22],
  ["Melbourne Airport", 29, "#636efa", WHITE, 7],
  ["Caulfield - North", 29, "#EBA500", DARK, 7],
  ["Thornbury", 30, "#FF33FF", DARK, 7],
  ["Northcote", 30, "#88D82C", DARK, 7],
  ["Dandenong North", 30, "#FF0349", WHITE, 7],
  ["Abbotsford", 30, "#078B9F", WHITE, 8],
  ["Caulfield - South", 34, "#F46B06", DARK, 8],
  ["Coburg", 35, "#750DEC", WHITE, 9],
  ["Point Nepean", 37, "#00664B", WHITE, 8],
  ["Brunswick East", 38, "#B72711", WHITE, 8],
  ["Essendon - Aberfeldie", 39, "#0A1BEF", WHITE, 8],
  ["South Melbourne", 45, "#FEE7B3", DARK, 8],
  ["Parkville", 45, "#FFFFFF", DARK, 8],
  ["Pakenham - North", 45, "#E5F7D5", DARK, 8],
  ["Hawthorn East", 46, "#FFCBDB", DARK, 8],
  ["Prahran - Windsor", 48, "#7DE7F9", DARK, 8],
  ["Albert Park", 49, "#FFD9BD", DARK, 8],
  ["Docklands", 57, "#E0C5FD", DARK, 9],
  ["Carlton", 60, "#34FFC9", DARK, 10],
  ["Ivanhoe East - Eaglemont", 61, "#F6A697", DARK, 8],
  ["North Melbourne", 71, "#C5C9FD", DARK, 10],
  ["South Yarra - East", 75, "#FECB52", DARK, 10],
  ["St Kilda", 80, "#FF97FF", DARK, 13],
  ["Brunswick", 82, "#B6E880", DARK, 13],
  ["Fitzroy", 86, "#FF6692", DARK, 14],
  ["Footscray", 102, "#19d3f3", DARK, 14],
  ["Keilor East", 107, "#FFA15A", DARK, 15],
  ["East Melbourne", 156, "#ab63fa", DARK, 16],
  ["Southbank", 173, "#00cc96", DARK, 20],
  ["Richmond (Vic.)", 216, "#EF553B", DARK, 18],
];

const PIE_LEGEND = [
  ["Melbourne", "#636efa"], ["Richmond (Vic.)", "#EF553B"], ["Southbank", "#00cc96"], ["East Melbourne", "#ab63fa"],
  ["Keilor East", "#FFA15A"], ["Footscray", "#19d3f3"], ["Fitzroy", "#FF6692"], ["Brunswick", "#B6E880"],
  ["St Kilda", "#FF97FF"], ["South Yarra - East", "#FECB52"], ["North Melbourne", "#C5C9FD"],
  ["Ivanhoe East - Eaglemont", "#F6A697"], ["Carlton", "#34FFC9"], ["Docklands", "#E0C5FD"],
];

function PieChart() {
  const R = 238;
  const r = 48;
  const total = SLICES.reduce((sum, s) => sum + s[1], 0);
  let acc = 0;
  const parts = SLICES.map(([name, n, fill, color, size]) => {
    const a0 = (acc / total) * 360 - 90;
    acc += n;
    const a1 = (acc / total) * 360 - 90;
    const at = (a, rad) => {
      const t = (a * Math.PI) / 180;
      return `${(rad * Math.cos(t)).toFixed(2)} ${(rad * Math.sin(t)).toFixed(2)}`;
    };
    const d = `M${at(a0, R)}A${R} ${R} 0 0 1 ${at(a1, R)}L${at(a1, r)}A${r} ${r} 0 0 0 ${at(a0, r)}Z`;
    return { name, n, fill, color, size, d, mid: (a0 + a1) / 2 };
  });
  return (
    <svg viewBox="0 0 655 710" className="block min-w-0 flex-1" fontFamily="'DejaVu Sans', sans-serif">
      <g transform="translate(381 322)">
        {parts.map((p) => <path key={p.name} d={p.d} fill={p.fill} />)}
        {parts.map((p, i) => {
          if (i === 0) {
            return (
              <g key={p.name} fill={p.color} fontSize="22" textAnchor="middle">
                <text x="112" y="-95">{p.name}</text>
                <text x="112" y="-66">{p.n}</text>
              </g>
            );
          }
          const left = p.mid > 90;
          const edge = left ? -234 : 234;
          const middle = edge + (left ? 1 : -1) * p.name.length * p.size * 0.29;
          return (
            <g key={p.name} transform={`rotate(${left ? p.mid + 180 : p.mid})`} fill={p.color} fontSize={p.size}>
              <text x={edge} y={-0.25 * p.size} textAnchor={left ? "start" : "end"}>{p.name}</text>
              <text x={middle} y={p.size} textAnchor="middle">{p.n}</text>
            </g>
          );
        })}
      </g>
    </svg>
  );
}

/* ---------- Timeline ---------- */

// Monthly counts, October 2010 to June 2020.
const MONTHLY = [
  2, 1, 12, 0, 2, 2, 6, 3, 14, 3, 2, 0, 2, 1, 3, 1, 3, 10, 3, 2, 4, 8, 13, 4, 5, 9, 13, 3, 5, 11, 12, 8, 14, 45, 67, 107, 200,
  29, 30, 27, 39, 50, 38, 37, 121, 73, 123, 77, 67, 107, 378, 136, 68, 158, 97, 48, 27, 16, 17, 9, 28, 11, 12, 12, 14, 13, 8,
  15, 11, 21, 54, 16, 14, 23, 23, 2, 6, 12, 5, 8, 11, 10, 7, 23, 48, 28, 18, 8, 9, 9, 4, 9, 2, 9, 29, 37, 33, 53, 172, 25, 21,
  51, 62, 74, 188, 23, 45, 38, 56, 47, 47, 41, 330, 100, 46, 34, 24,
];

const NOTES = [
  { lines: [["Australian Federal", 802, 276], ["Election  2013", 810, 303]], from: [815, 310], to: [823, 335] },
  { lines: [["Victorian State Election 2014", 1070, 107]], from: [1074, 113], to: [1087, 150] },
  { lines: [["Liberal Party", 1120, 319], ["Leadership Spill", 1128, 346]], from: [1135, 355], to: [1142, 378] },
  { lines: [["Victorian State Election 2018", 1974, 319]], from: [1980, 326], to: [1991, 363] },
  { lines: [["Australian Federal", 2083, 288], ["Election 2019", 2090, 316]], from: [2098, 324], to: [2105, 347] },
  { lines: [["Victorian Bushfires 2019/20", 2239, 157]], from: [2245, 164], to: [2257, 201] },
];

function Timeline() {
  const X = (m) => 202 + 18.86 * m;
  const Y = (v) => 541 - 1.0325 * v;
  const years = [2011, 2012, 2013, 2014, 2015, 2016, 2017, 2018, 2019, 2020];
  const ys = [0, 100, 200, 300, 400];
  const points = MONTHLY.map((v, i) => `${X(i - 3).toFixed(1)},${Y(v).toFixed(1)}`).join(" ");
  return (
    <svg viewBox="0 0 2538 710" className="block w-full" fontFamily="'DejaVu Sans', sans-serif" fill="#2a3f5f">
      <defs>
        <marker id="tip" viewBox="0 0 10 10" refX="8" refY="5" markerWidth="9" markerHeight="9" markerUnits="userSpaceOnUse" orient="auto">
          <path d="M0 0L10 5L0 10Z" fill="#2a3f5f" />
        </marker>
      </defs>
      <rect x="144" y="80" width="2250" height="486" fill="#E5ECF6" />
      <g stroke="#fff" strokeWidth="2">
        {years.map((v, i) => <path key={v} d={`M${X(i * 12)} 80V566`} />)}
        {ys.map((v) => <path key={v} d={`M144 ${Y(v)}H2394`} strokeWidth={v === 0 ? 4 : 2} />)}
      </g>
      <polyline points={points} fill="none" stroke="#636efa" strokeWidth="3.500" strokeLinejoin="round" />
      <g fontSize="22" textAnchor="middle">
        {years.map((v, i) => <text key={v} x={X(i * 12)} y="589">{v}</text>)}
        {NOTES.map((n) => (
          <g key={n.to.join()}>
            {n.lines.map(([t, x, y]) => <text key={t} x={x} y={y} className="whitespace-pre">{t}</text>)}
            <path d={`M${n.from.join(" ")}L${n.to.join(" ")}`} stroke="#2a3f5f" strokeWidth="2" markerEnd="url(#tip)" />
          </g>
        ))}
      </g>
      <g fontSize="22" textAnchor="end">
        {ys.map((v) => <text key={v} x="142" y={Y(v) + 8}>{v}</text>)}
      </g>
      <text x="1269" y="639" fontSize="25" textAnchor="middle">Date</text>
      <text transform="translate(56 321) rotate(-90)" fontSize="25" textAnchor="middle">{"# tweets"}</text>
    </svg>
  );
}

/* ---------- Page ---------- */

export default function App() {
  return (
    <div className="min-h-screen bg-[#f2f2f2] px-[5%] pt-[146px] pb-[17px] font-['Liberation_Sans',Arial,sans-serif] text-[#323232]">
      <h1 className="text-center text-[77px] leading-[96px]">Twitter analysis by Dash</h1>

      <div role="tablist" className="mt-[34px] grid grid-cols-3 text-[27px] leading-[42px]">
        <button role="tab" aria-selected="false" className="h-[118px] border-2 border-r-0 border-[#d6d6d6] bg-[#f9f9f9]">Scenario 1</button>
        <button role="tab" aria-selected="false" className="h-[118px] border-2 border-r-0 border-[#d6d6d6] bg-[#f9f9f9]">Scenario 2</button>
        <button role="tab" aria-selected="true" className="h-[118px] border-x-2 border-t-4 border-[#d6d6d6] border-t-[#1975FA] bg-white text-black">Scenario 3</button>
      </div>

      <div className="mt-[18px] ml-[18px] flex gap-9">
        <StatCard value="4454" label="No. of Tweets" />
        <StatCard value="1545" label="No. of Users" />
      </div>

      <main className="font-['DejaVu_Sans',Verdana,sans-serif] text-[#2a3f5f]">
        <Panel>
          <div className="bg-white pt-11 pb-[145px]">
            <h2 className="text-center text-[45px] leading-[60px]">Melbourne Political Sentiment</h2>
            <div className="mt-[76px] ml-36 flex items-start gap-[59px]">
              <div className="relative min-w-0 flex-1">
                <MelbourneMap />
                <button aria-label="Map information" className="absolute right-5 bottom-[18px] grid size-[42px] place-items-center rounded-full bg-white/60">
                  <svg viewBox="0 0 20 20" className="size-[34px]">
                    <path fillRule="evenodd" d="M4 10a6 6 0 1 0 12 0a6 6 0 1 0 -12 0M9 7a1 1 0 1 0 2 0a1 1 0 1 0 -2 0M9 10a1 1 0 1 1 2 0v3a1 1 0 1 1 -2 0" fill="#333" transform="translate(-2 -2) scale(1.200)" />
                  </svg>
                </button>
              </div>
              <ColorBar />
            </div>
          </div>
        </Panel>

        <Panel>
          <div className="flex bg-white">
            <div className="w-3/5">
              <h2 className="pt-[30px] pl-[286px] text-[31px] leading-[42px]">Average Suburb Sentiment vs. Median Weekly Rent</h2>
              <div className="flex items-start">
                <ScatterPlot />
                <div className="flex w-[382px] shrink-0 items-start pt-10">
                  <div className="w-[359px] text-[22px] leading-[34px]">
                    <p>Suburb</p>
                    <ul>
                      {SUBURB_LEGEND.map(([name, color]) => (
                        <li key={name} className="flex items-center pl-[23px] whitespace-nowrap">
                          <span className="mr-7 size-[18px] rounded-full opacity-70" style={{ backgroundColor: color }} />
                          {name}
                        </li>
                      ))}
                    </ul>
                  </div>
                  <ScrollThumb height={282} />
                </div>
              </div>
            </div>

            <div className="w-2/5">
              <h2 className="pt-[58px] text-center text-[31px] leading-[42px]">Number of Locatable Tweets by Suburb</h2>
              <div className="flex items-start">
                <PieChart />
                <div className="flex w-[361px] shrink-0 items-start pt-[87px]">
                  <ul className="w-[338px] pt-[3px] text-[22px] leading-[34px]">
                    {PIE_LEGEND.map(([name, color]) => (
                      <li key={name} className="flex items-center whitespace-nowrap">
                        <span className="mr-[25px] size-[22px]" style={{ backgroundColor: color }} />
                        {name}
                      </li>
                    ))}
                  </ul>
                  <ScrollThumb height={219} />
                </div>
              </div>
            </div>
          </div>
          <div className="h-3" />
        </Panel>

        <Panel>
          <div className="bg-white">
            <h2 className="pt-[58px] pl-[127px] text-[31px] leading-[42px]">Monthly Political Tweets in Melbourne with Exact Locations</h2>
            <Timeline />
          </div>
        </Panel>
      </main>
    </div>
  );
}
